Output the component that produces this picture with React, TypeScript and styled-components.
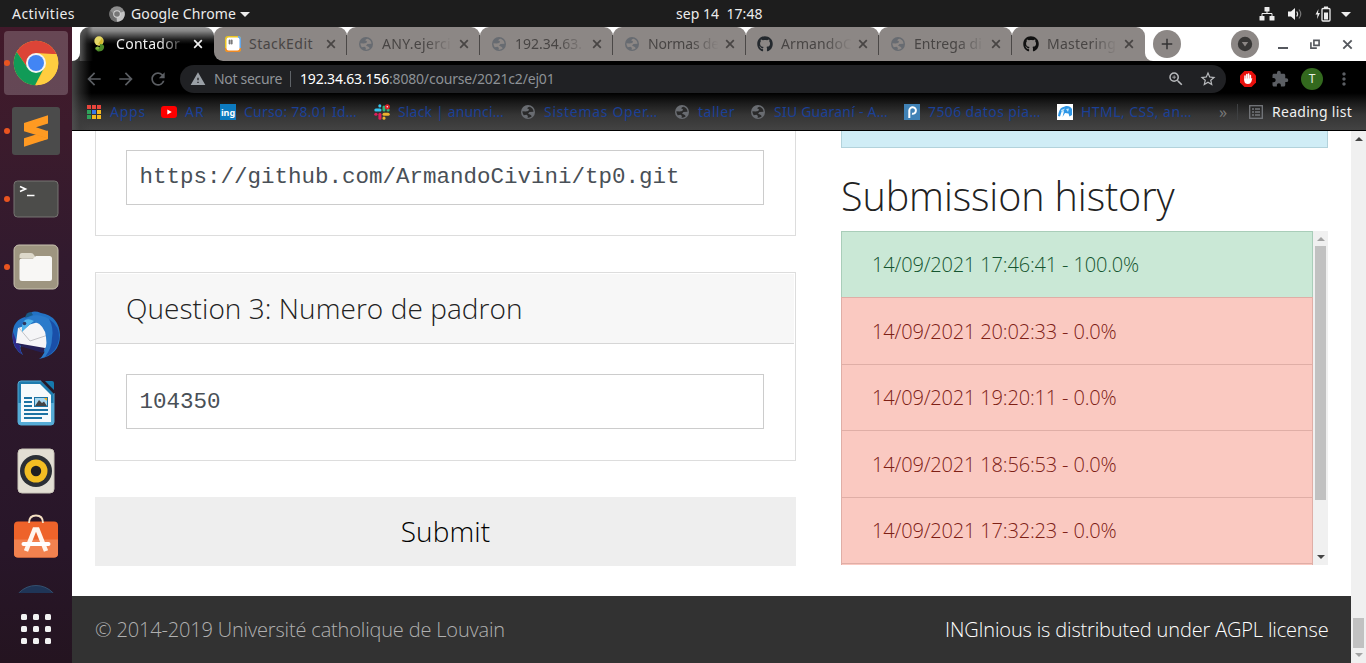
import React, { useLayoutEffect, useRef, useState } from "react";
import styled, { createGlobalStyle, css } from "styled-components";
import { FaGithub } from "react-icons/fa";
import {
  MdArrowBack, MdArrowForward, MdRefresh, MdWarning, MdZoomIn, MdStarBorder,
  MdExtension, MdMoreVert, MdAdd,
} from "react-icons/md";

const uiFont = `"Noto Sans", "Open Sans", sans-serif`;
const pageFont = `"Open Sans", "Noto Sans", sans-serif`;

const Global = createGlobalStyle`
  * { box-sizing: border-box; }
  html, body { margin: 0; padding: 0; overflow: hidden; background: #fff; }
  svg { display: block; flex: none; }
`;

/* ---------- text that keeps a given advance width ---------- */
const FitSpan = styled.span`
  display: inline-block;
  white-space: pre;
  flex: none;
`;

function Fit({ text, width }: { text: string; width: number }) {
  const ref = useRef<HTMLSpanElement>(null);
  const [spacing, setSpacing] = useState(0);
  useLayoutEffect(() => {
    const el = ref.current;
    if (!el) return;
    el.style.letterSpacing = "0px";
    const natural = el.getBoundingClientRect().width;
    const next = (width - natural) / text.length;
    el.style.letterSpacing = `${next}px`;
    setSpacing(next);
  }, [text, width]);
  return <FitSpan ref={ref} style={{ letterSpacing: `${spacing}px` }}>{text}</FitSpan>;
}

/* ---------- desktop ---------- */
const Desktop = styled.div`
  width: 1366px;
  height: 663px;
  display: flex;
  flex-direction: column;
  overflow: hidden;
  font-family: ${uiFont};
`;

const TopBar = styled.header`
  height: 27px;
  flex: none;
  display: flex;
  align-items: center;
  background: #1d1d1d;
  color: #ececec;
  font-size: 14px;
  line-height: 26px;
  padding: 0 15px 0 12px;
`;
const TopLeft = styled.div`
  width: 664px;
  display: flex;
  align-items: center;
`;
const AppMenu = styled.div`
  display: flex;
  align-items: center;
  margin-left: 34px;
  gap: 6px;
`;
const Tray = styled.div`
  flex: 1;
  display: flex;
  align-items: center;
  justify-content: flex-end;
  gap: 12px;
`;
const Caret = styled.i`
  border: 5px solid transparent;
  border-top-color: #ececec;
  border-bottom: 0;
  margin-top: 1px;
  margin-left: -2px;
`;
const Body = styled.div`
  flex: 1;
  min-height: 0;
  display: flex;
`;

/* ---------- dock ---------- */
const DockBar = styled.nav`
  width: 72px;
  flex: none;
  padding-top: 4px;
  display: flex;
  flex-direction: column;
  gap: 4px;
  background: linear-gradient(#42192a 0, #3c1b2c 100px, #311a2e 240px, #2c182b 380px, #281629 520px, #241420 636px);
  overflow: hidden;
`;
const DockItem = styled.div<{ $active?: boolean; $running?: boolean; $lift?: number }>`
  position: relative;
  width: 64px;
  height: 64px;
  margin-left: 4px;
  padding-bottom: ${(p) => p.$lift ?? 0}px;
  flex: none;
  display: flex;
  align-items: center;
  justify-content: center;
  border-radius: 4px;
  background: ${(p) => (p.$active ? "rgba(255,255,255,0.2)" : "none")};
  ${(p) => p.$running && css`
    &::before {
      content: "";
      position: absolute;
      left: 0;
      top: 29px;
      width: 6px;
      height: 6px;
      border-radius: 50%;
      background: #e95420;
    }
  `}
`;
const DockCut = styled.div`
  height: 8px;
  margin-top: 10px;
  flex: none;
  display: flex;
  justify-content: center;
  overflow: hidden;
`;
const AppsGrid = styled.div`
  display: grid;
  grid-template-columns: repeat(3, 6px);
  gap: 6px;
  margin: 17px 0 0 21px;
  span { width: 6px; height: 6px; border-radius: 1.5px; background: #f2f2f2; }
`;

/* ---------- browser window ---------- */
const Window = styled.main`
  flex: 1;
  min-width: 0;
  display: flex;
  flex-direction: column;
`;
const Chrome = styled.div`
  height: 104px;
  flex: none;
  display: flex;
  flex-direction: column;
  background:
    linear-gradient(90deg, rgba(80,80,80,0.85) 0, rgba(60,60,60,0.6) 8px, rgba(0,0,0,0) 19px),
    linear-gradient(#000 0, #000 66px, #1b1b1b 76px, #353535 88px, #434343 103px);
  border-bottom: 1px solid #000;
`;
const TabStrip = styled.div`
  height: 34px;
  flex: none;
  display: flex;
  background: #fff;
`;
const StripEdge = styled.div`
  width: 8px;
  background: #fff;
  border-bottom-right-radius: 8px;
`;
const EdgeBack = styled.div`
  display: flex;
  background: #393939;
`;
const TabBack = styled.div<{ $first?: boolean }>`
  display: flex;
  background: ${(p) => (p.$first ? "linear-gradient(#fff 50%, #000 50%)" : "#fff")};
`;
const TabBox = styled.div<{ $active?: boolean; $first?: boolean }>`
  width: ${(p) => (p.$active ? 134 : 133)}px;
  display: flex;
  align-items: center;
  padding-left: ${(p) => (p.$active ? 12 : 11)}px;
  border-radius: ${(p) => (p.$first ? "9px 9px 0 9px" : "9px 9px 0 0")};
  font-size: 14px;
  line-height: 34px;
  color: ${(p) => (p.$active ? "#f1f1f1" : "#484544")};
  background: ${(p) =>
    p.$active
      ? "linear-gradient(90deg, #555 0, rgba(40,40,40,.6) 7px, rgba(0,0,0,0) 13px), linear-gradient(#9a9a9a 0, #858585 4px, #555 8px, #1b1b1b 13px, #000 17px)"
      : "#8c8785"};
`;
const TabIcon = styled.div`
  width: 16px;
  height: 16px;
  display: flex;
  align-items: center;
  justify-content: center;
  margin-right: 8px;
  color: #676b71;
`;
const TabTitle = styled.div<{ $fade: boolean }>`
  width: 72px;
  white-space: nowrap;
  ${(p) => p.$fade && css`mask-image: linear-gradient(90deg, #000 60%, transparent 98%);`}
`;
const TabClose = styled.div`
  width: 14px;
  padding-left: 2px;
  margin-left: 3px;
`;
const TabSeparator = styled.div`
  width: 1px;
  height: 20px;
  margin-left: 8px;
  margin-top: 1px;
  background: #4b4847;
`;
const Flare = styled.div`
  width: 8px;
  background: #8c8785;
  display: flex;
  &::before { content: ""; flex: 1; background: #fff; border-bottom-left-radius: 8px; }
`;
const RoundButton = styled.div<{ $left: number }>`
  width: 28px;
  height: 28px;
  margin: 3px 0 0 ${(p) => p.$left}px;
  border-radius: 50%;
  background: #8c8785;
  color: #333;
  display: flex;
  align-items: center;
  justify-content: center;
`;
const WindowButtons = styled.div`
  display: flex;
  align-items: center;
  gap: 22px;
  margin-left: 19px;
`;
const Toolbar = styled.div`
  height: 36px;
  flex: none;
  display: flex;
  align-items: center;
  padding-left: 12px;
  color: #5b5e63;
`;
const NavButtons = styled.div`
  display: flex;
  gap: 12px;
  width: 96px;
`;
const AddressBar = styled.div`
  width: 1046px;
  height: 28px;
  border-radius: 14px;
  background: #202124;
  display: flex;
  align-items: center;
  padding: 0 9px 0 10px;
  font-size: 14px;
  line-height: 28px;
  color: #9aa0a6;
`;
const NotSecure = styled.div`
  margin-left: 8px;
  width: 76px;
  color: #8f9398;
`;
const Divider = styled.div<{ $h: number; $c: string }>`
  width: 1px;
  height: ${(p) => p.$h}px;
  background: ${(p) => p.$c};
`;
const Host = styled.span`
  color: #fff;
  margin-left: 9px;
  display: flex;
`;
const Path = styled.span`
  color: #8d9196;
  flex: 1;
  display: flex;
`;
const BarIcons = styled.div`
  display: flex;
  gap: 14px;
  color: #b9bbbe;
`;
const Extensions = styled.div`
  display: flex;
  align-items: center;
  margin-left: 13px;
`;
const PuzzleIcon = styled(MdExtension)`
  margin-left: 14px;
`;
const Avatar = styled.div`
  width: 22px;
  height: 22px;
  border-radius: 50%;
  background: #33691e;
  color: #e8efe4;
  font-size: 12px;
  line-height: 22px;
  text-align: center;
  margin: 0 11px 0 12px;
`;
const Bookmarks = styled.div`
  flex: 1;
  display: flex;
  align-items: center;
  padding: 0 0 3px 14px;
  font-size: 14px;
  line-height: 20px;
  color: #1b4096;
`;
const Bookmark = styled.div<{ $w: number }>`
  width: ${(p) => p.$w}px;
  flex: none;
  display: flex;
  align-items: center;
  gap: 8px;
`;
const MarkIcon = styled.div`
  width: 16px;
  height: 16px;
  display: flex;
  align-items: center;
  justify-content: center;
  color: #696c71;
`;
const Favicon = styled.div<{ $bg: string }>`
  width: 16px;
  height: 16px;
  background: ${(p) => p.$bg};
  color: #fff;
  font: 700 9px/17px ${uiFont};
  text-align: center;
`;
const Overflow = styled.div`
  width: 18px;
  margin-left: 8px;
  color: #777;
  font-size: 16px;
`;
const ReadingList = styled.div`
  display: flex;
  align-items: center;
  gap: 9px;
  margin-left: 11px;
  color: #f0f0f0;
`;

/* ---------- web page ---------- */
const Viewport = styled.div`
  flex: 1;
  min-height: 0;
  display: flex;
`;
const Page = styled.div`
  width: 1279px;
  display: flex;
  flex-direction: column;
  font-family: ${pageFont};
  font-weight: 300;
  overflow: hidden;
`;
const Columns = styled.div`
  height: 465px;
  flex: none;
  display: flex;
  gap: 45px;
  padding-left: 23px;
`;
const Questions = styled.div`
  width: 701px;
`;
const Panel = styled.section<{ $cut?: boolean }>`
  border: 1px solid #ddd;
  ${(p) => p.$cut && css`border-top: 0; padding-top: 19px;`}
  margin-bottom: 36px;
  padding-bottom: ${(p) => (p.$cut ? 30 : 31)}px;
`;
const PanelTitle = styled.h2`
  height: 71px;
  margin: 0 1px 30px 0;
  padding: 0 0 0 30px;
  border-top: 1px solid #fff;
  border-bottom: 1px solid #d6d6d6;
  background: #f7f7f7;
  font-size: 28px;
  font-weight: 300;
  line-height: 68px;
  color: #222;
`;
const AnswerInput = styled.div<{ $line: number }>`
  height: 55px;
  margin: 0 31px 0 30px;
  padding-left: 12.5px;
  border: 1px solid #ccc;
  background: #fff;
  font: 400 22.5px/${(p) => p.$line}px "Liberation Mono", monospace;
  color: #495057;
`;
const SubmitButton = styled.button`
  display: block;
  width: 701px;
  height: 69px;
  border: 0;
  padding: 0;
  background: #eee;
  color: #000;
  font: 300 28px/69px ${pageFont};
  text-align: center;
`;
const Side = styled.aside`
  width: 487px;
`;
const InfoBox = styled.div`
  height: 17px;
  background: #d0edf6;
  border: 1px solid #b2d2db;
  border-top: 0;
`;
const SideTitle = styled.h1`
  height: 83px;
  margin: 0;
  padding-top: 20px;
  font-size: 39.5px;
  font-weight: 300;
  line-height: 56px;
  color: #222;
`;
const History = styled.div`
  height: 334px;
  display: flex;
  overflow: hidden;
`;
const HistoryList = styled.div`
  width: 472px;
  overflow: hidden;
`;
const Entry = styled.div<{ $ok?: boolean; $line?: number }>`
  height: 66.45px;
  padding-left: 30px;
  font-size: 20px;
  line-height: ${(p) => p.$line ?? 66}px;
  border: 1px solid ${(p) => (p.$ok ? "#a9cdb9" : "#dfaea6")};
  border-bottom: 0;
  background: ${(p) => (p.$ok ? "#cae8d6" : "#fac9c1")};
  color: ${(p) => (p.$ok ? "#155530" : "#7d2015")};
`;
const Footer = styled.footer`
  height: 67px;
  flex: none;
  display: flex;
  justify-content: space-between;
  padding: 0 22.5px 0 23px;
  background: #323232;
  color: #b0b0b0;
  font-size: 20px;
  line-height: 67px;
`;
const FooterLink = styled.span`
  color: #fff;
`;
const Track = styled.div`
  width: 15px;
  flex: none;
  background: #f0f0f0;
  display: flex;
  flex-direction: column;
  align-items: center;
`;
const Arrow = styled.i<{ $down?: boolean; $dim?: boolean; $end: number }>`
  width: 0;
  height: 0;
  border: 4px solid transparent;
  ${(p) => p.$down
    ? css`border-top-color: ${p.$dim ? "#a3a3a3" : "#454545"}; border-bottom: 0; margin: auto 0 ${p.$end}px;`
    : css`border-bottom-color: ${p.$dim ? "#a3a3a3" : "#454545"}; border-top: 0; margin-top: ${p.$end}px;`}
`;
const Thumb = styled.div<{ $top: number; $h: number }>`
  width: 11px;
  height: ${(p) => p.$h}px;
  margin-top: ${(p) => p.$top}px;
  background: #c1c1c1;
`;

/* ---------- drawings ---------- */
const ChromeLogo = () => (
  <svg width="48" height="48" viewBox="0 0 48 48">
    <circle cx="24" cy="24" r="22.3" fill="#fcc934" />
    <path d="M4.7 12.9A22.3 22.3 0 0 1 43.3 12.9Q44.3 14.8 44.3 15H24L15 28Z" fill="#dc4437" />
    <path d="M4.7 12.9A22.3 22.3 0 0 0 23 46.3L32 29 15 28Z" fill="#119b57" />
    <path d="M33 29 24 46.3A22.3 22.3 0 0 0 44.5 15.3L24 14Z" fill="#ffcd40" />
    <circle cx="24" cy="24" r="10" fill="#f4f4f4" />
    <circle cx="24" cy="24" r="8" fill="#4285f4" />
  </svg>
);
const GreyChrome = () => (
  <svg width="16" height="16" viewBox="0 0 16 16">
    <circle cx="8" cy="8" r="7.7" fill="#8d8d8d" />
    <path d="M8 8 15.3 5.3A7.7 7.7 0 0 1 8 15.7Z" fill="#c4c4c4" />
    <path d="M8 15.7A7.7 7.7 0 0 1 1.3 4.2L6 10Z" fill="#6f6f6f" />
    <circle cx="8" cy="8" r="3.8" fill="#d5d5d5" />
    <circle cx="8" cy="8" r="2.8" fill="#777" />
  </svg>
);
const Sublime = () => (
  <svg width="48" height="48" viewBox="0 0 48 48">
    <rect width="48" height="48" rx="3" fill="#4b4b4b" />
    <path d="M24 26.5 36 23.5V32L30 33.5Z" fill="#e58213" />
    <path d="M12 16 36 8.3V16.6L24 20.3 36 24.2V31.5L12 24.2Z" fill="#ff9a22" />
    <path d="M12 31.3 24 27.6 36 31.5V32L12 39.8Z" fill="#ff9a22" />
  </svg>
);
const Terminal = () => (
  <svg width="46" height="38" viewBox="0 0 46 38">
    <rect x="1" y="1" width="44" height="36" rx="3.5" fill="#4c4c4a" stroke="#777572" />
    <path d="M7 6.5 12.5 9 7 11.5" fill="none" stroke="#fff" strokeWidth="1.6" />
    <path d="M14 15.5H21.5" stroke="#fff" strokeWidth="1.5" />
  </svg>
);
const Files = () => (
  <svg width="46" height="46" viewBox="0 0 46 46">
    <rect x="1" y="1" width="44" height="44" rx="5" fill="#9e9580" stroke="#c9c2b0" />
    <path d="M6.5 12Q6.5 9 9 9H18Q20 9 21 11L23 14H6.5Z" fill="#ddd8ca" />
    <path d="M6.5 16.5Q6.5 14.5 9 14.5H20L23 12H36.5Q39 12 39 14.5V34.5Q39 37 36.5 37H9Q6.5 37 6.5 34.5Z" fill="#f8f7f5" />
  </svg>
);
const Thunderbird = () => (
  <svg width="50" height="50" viewBox="0 0 50 50">
    <path d="M2 20Q-1 38 12 45Q8 39 10 36L35 42Q33 46 28 49Q49 45 49 25Q48 6 30 3Q20-1 18 6Q4 8 2 20Z" fill="#2372c4" />
    <path d="M2 22Q0 37 12 45Q8 40 9 36L5 30Z" fill="#2f2a8c" />
    <path d="M7 18 34 10 41 28 33 40 5 33Z" fill="#f5f5f7" />
    <path d="M5 33 12 37 32 43 34 38Z" fill="#252056" />
    <path d="M8 18 19 31 37 25" fill="none" stroke="#c3c3c7" />
    <path d="M14 10Q24 1 38 9Q49 18 47 30Q44 44 30 48Q37 39 35 27Q34 15 22 11Q17 17 12 20Q10 13 14 10Z" fill="#2b7bcb" />
    <path d="M14 10Q10 14 11 22L18 15 23 11Q18 8 14 10Z" fill="#4fb2ea" />
    <path d="M38 9Q49 16 48 29Q46 42 34 47Q41 38 41 28Q43 18 38 9Z" fill="#1a4fa8" />
    <circle cx="13.5" cy="13.5" r="1.8" fill="#303860" />
    <path d="M14 8Q15 2 20 2L22 5Z" fill="#185a86" />
  </svg>
);
const Writer = () => (
  <svg width="38" height="46" viewBox="0 0 38 46">
    <path d="M4 1H24L37 13V42Q37 45 34 45H4Q1 45 1 42V4Q1 1 4 1Z" fill="#1f7cae" stroke="#54a6d0" />
    <path d="M1 23H37V42Q37 45 34 45H4Q1 45 1 42Z" fill="#56acd6" />
    <path d="M4 4H23L34 15V42H4Z" fill="#f6fafc" />
    <path d="M24 1H28L37 10V14Z" fill="#241a28" />
    <path d="M28 1H35Q37 1 37 3V10Z" fill="#1679ad" />
    <path d="M7 18H15M7 22H15M7 26H15M7 30H31M7 34H31M7 38H25" stroke="#1d73a3" strokeWidth="2" />
    <rect x="17.5" y="17.5" width="13" height="9" fill="#a7d7ef" stroke="#1d73a3" />
    <path d="M18 26 22 20 25 23 27 21.5 30 26Z" fill="#444" />
    <path d="M27 18H30V21Z" fill="#f6b11d" />
  </svg>
);
const Speaker = () => (
  <svg width="38" height="46" viewBox="0 0 38 46">
    <rect x="1" y="1" width="36" height="44" rx="4" fill="#e2ded3" stroke="#c9c5b8" />
    <circle cx="19" cy="23" r="16" fill="#2b2f35" />
    <circle cx="19" cy="23" r="11.5" fill="#f2bd23" />
    <circle cx="19" cy="23" r="5.2" fill="#1f1f22" />
  </svg>
);
const Software = () => (
  <svg width="46" height="44" viewBox="0 0 46 44">
    <rect x="1" y="7.5" width="44" height="36" rx="4" fill="#ee632a" />
    <path d="M1 25.5H45V39.5Q45 43.5 41 43.5H5Q1 43.5 1 39.5Z" fill="#f2824f" />
    <path d="M13 37 21.5 15.5H24.5L33 37" fill="none" stroke="#fff6ee" strokeWidth="4.5" />
    <path d="M10.5 30H35.5" stroke="#fff" strokeWidth="4" strokeLinecap="round" />
    <path d="M16 9Q16 1.5 23 1.5T30 9" fill="none" stroke="#f4dfc2" strokeWidth="1.8" />
  </svg>
);
const Network = () => (
  <svg width="16" height="14" viewBox="0 0 16 14" fill="#ececec">
    <rect x="5.5" y="0" width="5" height="4.5" rx=".5" />
    <rect x="0.5" y="9" width="5" height="4.5" rx=".5" />
    <rect x="10.5" y="9" width="5" height="4.5" rx=".5" />
    <path d="M8 4V6.5M3 9V6.5H13V9" fill="none" stroke="#ececec" />
  </svg>
);
const Volume = () => (
  <svg width="16" height="14" viewBox="0 0 16 14">
    <path d="M1 4.5H4L8 1V13L4 9.5H1Z" fill="#f2f2f2" />
    <path d="M9.7 4.5Q11.5 7 9.7 9.5" fill="none" stroke="#ddd" strokeWidth="1.2" />
    <path d="M12 2.5Q15.5 7 12 11.5" fill="none" stroke="#777" strokeWidth="1.2" />
  </svg>
);
const Battery = () => (
  <svg width="16" height="16" viewBox="0 0 16 16">
    <path d="M3.5 3 .5 8.5H2.5L2 13 5 7H3Z" fill="#ececec" />
    <rect x="7" y="2.5" width="8" height="12.5" rx="1" fill="none" stroke="#ececec" strokeWidth="1.3" />
    <rect x="9" y="0.5" width="4" height="2" fill="#ececec" />
    <rect x="9" y="6.5" width="4" height="7" fill="#ececec" />
  </svg>
);
const Quince = () => (
  <svg width="16" height="16" viewBox="0 0 16 16">
    <circle cx="7" cy="5" r="4.7" fill="#e6d968" />
    <path d="M10 2Q12 6 9 9L6 8Z" fill="#d3b92d" />
    <path d="M8 8Q13 8 12 12Q11 15.5 6 15.5L3 13Q3 10 8 11Z" fill="#4d8a2a" />
    <circle cx="5.5" cy="12" r="1.6" fill="#86b53d" />
  </svg>
);
const StackEditIcon = () => (
  <svg width="16" height="16" viewBox="0 0 16 16">
    <rect width="16" height="16" rx="3" fill="#eac524" />
    <path d="M13 0Q16 0 16 3V13L13 14Z" fill="#64a8ec" />
    <path d="M0 12H16V13Q16 16 13 16H3Q0 16 0 13Z" fill="#f08a24" />
    <rect x="1.5" y="1.5" width="13" height="13" rx="2" fill="#fff" />
    <path d="M4.7 3.5V8.5M6.7 3.5V8.5M3.3 5H8M3.3 7H8" stroke="#555" strokeWidth=".8" />
  </svg>
);
const AppsIcon = () => (
  <svg width="14" height="14" viewBox="0 0 14 14">
    {["#e8453c", "#e8453c", "#e8453c", "#2fa35a", "#3b78e7", "#f5b81f", "#2fa35a", "#f5b81f", "#f5b81f"].map((c, i) => (
      <rect key={i} x={(i % 3) * 5} y={Math.floor(i / 3) * 5} width="4" height="4" fill={c} />
    ))}
  </svg>
);
const YouTube = () => (
  <svg width="16" height="12" viewBox="0 0 16 12">
    <rect width="16" height="12" rx="3" fill="#f00" />
    <path d="M6.3 3.4V8.6L10.8 6Z" fill="#fff" />
  </svg>
);
const Slack = () => (
  <svg width="16" height="16" viewBox="0 0 16 16" strokeWidth="3" strokeLinecap="round" fill="none">
    <path d="M1.8 6H6" stroke="#36c5f0" /><path d="M5.8 1.8V2" stroke="#36c5f0" />
    <path d="M10 3V6" stroke="#2eb67d" /><path d="M14.2 6H14" stroke="#2eb67d" />
    <path d="M10 10.2H14.2" stroke="#ecb22e" /><path d="M10 14.2V14" stroke="#ecb22e" />
    <path d="M5.9 10.2V14.2" stroke="#e01e5a" /><path d="M1.8 10.2H2" stroke="#e01e5a" />
    <circle cx="13.3" cy="2.8" r="1.7" fill="#fff" stroke="#d8232a" strokeWidth="1.8" />
  </svg>
);
const Paint = () => (
  <svg width="16" height="16" viewBox="0 0 16 16">
    <rect width="16" height="16" fill="#4082b6" />
    <path d="M5.3 14V6.5A3.3 3.3 0 1 1 8 9.8" fill="none" stroke="#fff" strokeWidth="2" />
  </svg>
);
const Fish = () => (
  <svg width="16" height="16" viewBox="0 0 16 16">
    <rect width="16" height="16" fill="#fff" />
    <path d="M1 12Q2 5 5 3.5L9 2Q13 1.5 15 5V11L12.5 12.5 11.5 9.5 8 9 5.5 13 7 7 4.500 8 3 12.5Z" fill="#2e96e6" />
    <path d="M4 6 8 4.5 5 9ZM9 5 12 4.5 11 8Z" fill="#bfe5fa" />
  </svg>
);
const Hand = () => (
  <svg width="18" height="18" viewBox="0 0 18 18">
    <path d="M5.5 1H12.5L17 5.5V12.5L12.5 17H5.5L1 12.5V5.5Z" fill="#e8100c" />
    <path d="M6 10V6M7.8 9V4.5M9.6 9V4M11.4 9V5.5" stroke="#fff" strokeWidth="1.5" strokeLinecap="round" />
    <path d="M5.3 8.5H12.1L13.3 8 12.5 11.5Q11.5 14 9 14Q5.5 14 5.3 11Z" fill="#fff" />
  </svg>
);
const ListIcon = () => (
  <svg width="14" height="14" viewBox="0 0 14 14" fill="none" stroke="#74777b">
    <rect x=".7" y=".7" width="12.6" height="12.6" strokeWidth="1.3" />
    <path d="M3 4H5M6 4H11M3 7H5M6 7H11M3 10H5M6 10H11" strokeWidth="1.4" />
  </svg>
);
const DropDisc = () => (
  <svg width="16" height="16" viewBox="0 0 16 16">
    <circle cx="8" cy="8" r="7.2" fill="#383736" />
    <path d="M4.8 6H11.2L8 10.5Z" fill="#8c8785" />
  </svg>
);
const Cross = ({ size = 10, color = "currentColor" }: { size?: number; color?: string }) => (
  <svg width={size} height={size} viewBox="0 0 10 10">
    <path d="M1.2 1.2 8.8 8.8M8.8 1.2 1.2 8.8" stroke={color} strokeWidth="1.7" />
  </svg>
);
const Minimize = () => <svg width="10" height="12"><path d="M0 10H10" stroke="#55585e" strokeWidth="2" /></svg>;
const Restore = () => (
  <svg width="10" height="11" viewBox="0 0 11 11" fill="none" stroke="#55585e" strokeWidth="1.8">
    <path d="M4.3 1H10V6.5H4.3Z" /><path d="M1 3V9.5H7.5" />
  </svg>
);
const Globe = ({ land = "#8c8785" }: { land?: string }) => (
  <svg width="14" height="14" viewBox="0 0 14 14">
    <circle cx="7" cy="7" r="7" fill="currentColor" />
    <path d="M8.8 1.7Q6.5 2 6.2 3.5L8 4.2 7.3 6 4.5 6.4 1.4 6.2Q1.3 8.5 2.7 10.2L5.5 9.8 7 11 6.4 12.6Q9 13 10.8 11.3L9.8 10 7 8.5 8.5 7 12.5 6.8Q12.4 3.2 8.8 1.7Z"
      fill={land} />
  </svg>
);
const DarkGlobe = () => <Globe land="#2a2a2a" />;

/* ---------- data ---------- */
const tabs = [
  { title: "Contador", width: 64, icon: <Quince />, fade: true },
  { title: "StackEdit", width: 64, icon: <StackEditIcon />, fade: false },
  { title: "ANY.ejerci", width: 69, icon: <Globe />, fade: true },
  { title: "192.34.63.", width: 67, icon: <Globe />, fade: true },
  { title: "Normas de", width: 71, icon: <Globe />, fade: true },
  { title: "ArmandoC", width: 71, icon: <FaGithub size={16} color="#24292e" />, fade: true },
  { title: "Entrega di", width: 68, icon: <Globe />, fade: true },
  { title: "Mastering", width: 69, icon: <FaGithub size={16} color="#111" />, fade: true },
];
const bookmarks = [
  { title: "Apps", box: 75, width: 36, icon: <AppsIcon /> },
  { title: "AR", box: 59, width: 20, icon: <YouTube /> },
  { title: "Curso: 78.01 Id…", box: 154, width: 113, icon: <Favicon $bg="#0c7abf">ing</Favicon> },
  { title: "Slack | anunci…", box: 146, width: 106, icon: <Slack /> },
  { title: "Sistemas Oper…", box: 154, width: 114, icon: <DarkGlobe /> },
  { title: "taller", box: 76, width: 37, icon: <DarkGlobe /> },
  { title: "SIU Guaraní - A…", box: 154, width: 114, icon: <DarkGlobe /> },
  { title: "7506 datos pia…", box: 153, width: 113, icon: <Paint /> },
  { title: "HTML, CSS, an…", box: 154, width: 111, icon: <Fish /> },
];
const history = [
  { text: "14/09/2021 17:46:41 - 100.0%", width: 267, line: 66, ok: true },
  { text: "14/09/2021 20:02:33 - 0.0%", width: 244.5, line: 67 },
  { text: "14/09/2021 19:20:11 - 0.0%", width: 244.5, line: 66 },
  { text: "14/09/2021 18:56:53 - 0.0%", width: 244.5, line: 67 },
  { text: "14/09/2021 17:32:23 - 0.0%", width: 244.5, line: 66 },
];

export default function App() {
  return (
    <Desktop>
      <Global />
      <TopBar>
        <TopLeft>
          <Fit text="Activities" width={63} />
          <AppMenu>
            <GreyChrome />
            <Fit text="Google Chrome" width={105} />
            <Caret />
          </AppMenu>
        </TopLeft>
        <Fit text="sep 14  17:48" width={86.5} />
        <Tray><Network /><Volume /><Battery /><Caret /></Tray>
      </TopBar>
      <Body>
        <DockBar>
          <DockItem $active $running><ChromeLogo /></DockItem>
          <DockItem $running><Sublime /></DockItem>
          <DockItem $running><Terminal /></DockItem>
          <DockItem $running><Files /></DockItem>
          <DockItem><Thunderbird /></DockItem>
          <DockItem><Writer /></DockItem>
          <DockItem><Speaker /></DockItem>
          <DockItem $lift={6}><Software /></DockItem>
          <DockCut>
            <svg width="48" height="48"><circle cx="24" cy="24" r="23.5" fill="#1f3557" stroke="#34506f" /></svg>
          </DockCut>
          <AppsGrid>{Array.from({ length: 9 }, (_, i) => <span key={i} />)}</AppsGrid>
        </DockBar>
        <Window>
          <Chrome>
            <TabStrip>
              <EdgeBack><StripEdge /></EdgeBack>
              {tabs.map((t, i) => (
                <TabBack key={t.title} $first={i === 1}>
                  <TabBox $active={i === 0} $first={i === 1}>
                    <TabIcon>{t.icon}</TabIcon>
                    <TabTitle $fade={t.fade}><Fit text={t.title} width={t.width} /></TabTitle>
                    <TabClose><Cross /></TabClose>
                    {i > 0 && i < tabs.length - 1 && <TabSeparator />}
                  </TabBox>
                </TabBack>
              ))}
              <Flare />
              <RoundButton $left={0}><MdAdd size={18} /></RoundButton>
              <RoundButton $left={50}><DropDisc /></RoundButton>
              <WindowButtons><Minimize /><Restore /><Cross size={11} color="#55585e" /></WindowButtons>
            </TabStrip>
            <Toolbar>
              <NavButtons><MdArrowBack size={20} /><MdArrowForward size={20} /><MdRefresh size={20} /></NavButtons>
              <AddressBar>
                <MdWarning size={16} />
                <NotSecure><Fit text="Not secure" width={68} /></NotSecure>
                <Divider $h={16} $c="#5f6368" />
                <Host><Fit text="192.34.63.156" width={89} /></Host>
                <Path><Fit text=":8080/course/2021c2/ej01" width={165.5} /></Path>
                <BarIcons><MdZoomIn size={18} /><MdStarBorder size={18} /></BarIcons>
              </AddressBar>
              <Extensions>
                <Hand />
                <PuzzleIcon size={18} />
                <Avatar>T</Avatar>
                <MdMoreVert size={20} />
              </Extensions>
            </Toolbar>
            <Bookmarks>
              {bookmarks.map((b) => (
                <Bookmark key={b.title} $w={b.box}>
                  <MarkIcon>{b.icon}</MarkIcon>
                  <Fit text={b.title} width={b.width} />
                </Bookmark>
              ))}
              <Overflow>»</Overflow>
              <Divider $h={16} $c="#3e4042" />
              <ReadingList><ListIcon /><Fit text="Reading list" width={80} /></ReadingList>
            </Bookmarks>
          </Chrome>
          <Viewport>
            <Page>
              <Columns>
                <Questions>
                  <Panel $cut>
                    <AnswerInput $line={53}>https://github.com/ArmandoCivini/tp0.git</AnswerInput>
                  </Panel>
                  <Panel>
                    <PanelTitle><Fit text="Question 3: Numero de padron" width={396.5} /></PanelTitle>
                    <AnswerInput $line={54}>104350</AnswerInput>
                  </Panel>
                  <SubmitButton><Fit text="Submit" width={89.5} /></SubmitButton>
                </Questions>
                <Side>
                  <InfoBox />
                  <SideTitle><Fit text="Submission history" width={333.5} /></SideTitle>
                  <History>
                    <HistoryList>
                      {history.map((h) => (
                        <Entry key={h.text} $ok={h.ok} $line={h.line}><Fit text={h.text} width={h.width} /></Entry>
                      ))}
                      <Entry />
                    </HistoryList>
                    <Track>
                      <Arrow $dim $end={6} />
                      <Thumb $top={5} $h={254} />
                      <Arrow $down $end={6} />
                    </Track>
                  </History>
                </Side>
              </Columns>
              <Footer>
                <Fit text="© 2014-2019 Université catholique de Louvain" width={410} />
                <FooterLink><Fit text="INGInious is distributed under AGPL license" width={383.5} /></FooterLink>
              </Footer>
            </Page>
            <Track>
              <Arrow $end={6} />
              <Thumb $top={477} $h={30} />
              <Arrow $down $dim $end={6} />
            </Track>
          </Viewport>
        </Window>
      </Body>
    </Desktop>
  );
}
